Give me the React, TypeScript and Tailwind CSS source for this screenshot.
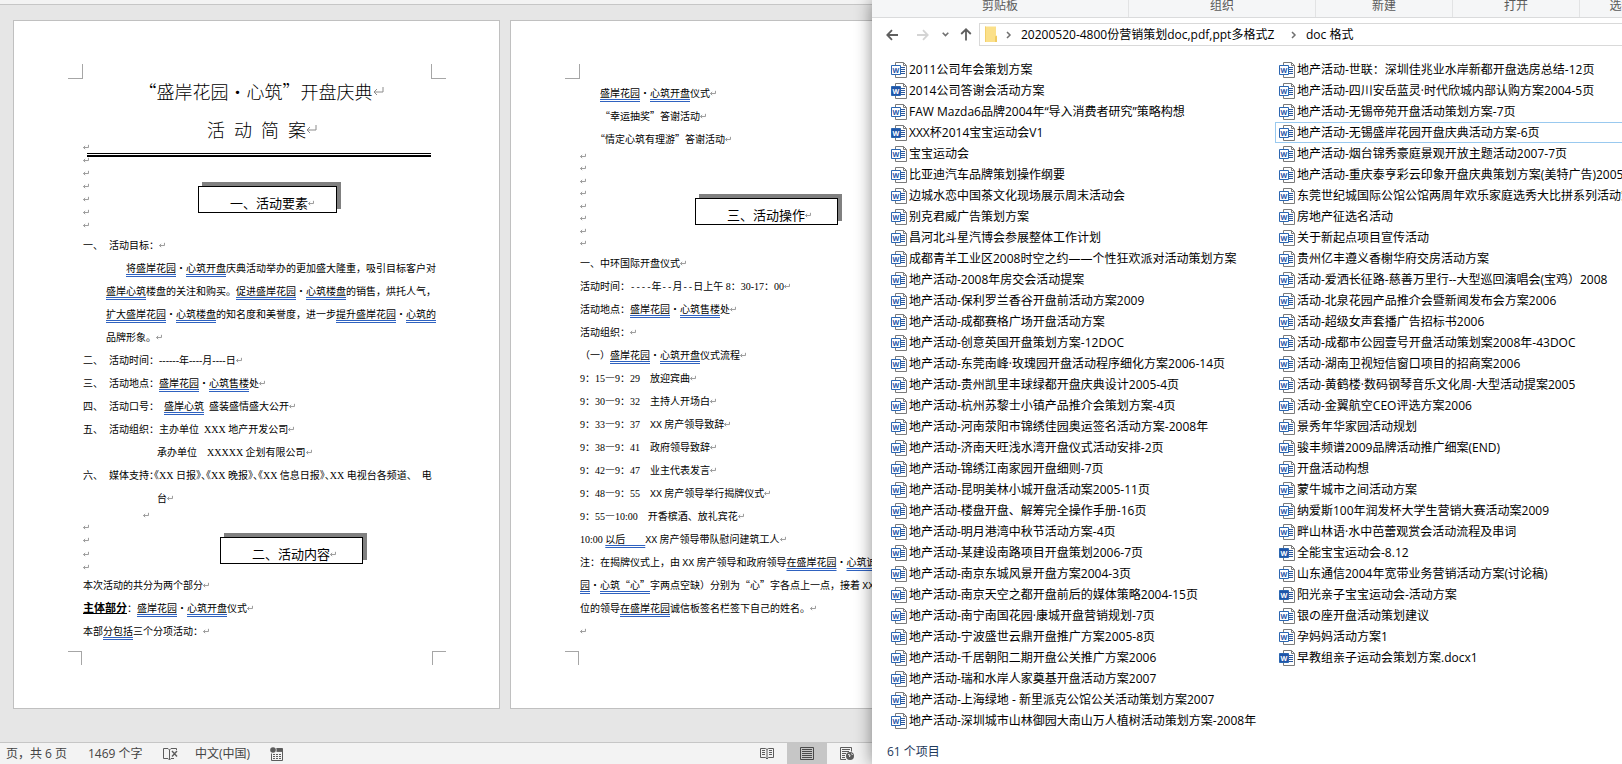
import type { ReactNode } from "react";

type FileItem = {
  name: string;
  docx?: boolean;
  focused?: boolean;
};

const FILES: FileItem[] = [
  { name: "2011公司年会策划方案" },
  { name: "2014公司答谢会活动方案", docx: true },
  { name: "FAW Mazda6品牌2004年“导入消费者研究”策略构想" },
  { name: "XXX杯2014宝宝运动会V1", docx: true },
  { name: "宝宝运动会" },
  { name: "比亚迪汽车品牌策划操作纲要" },
  { name: "边城水恋中国茶文化现场展示周末活动会" },
  { name: "别克君威广告策划方案" },
  { name: "昌河北斗星汽博会参展整体工作计划" },
  { name: "成都青羊工业区2008时空之约——个性狂欢派对活动策划方案" },
  { name: "地产活动-2008年房交会活动提案" },
  { name: "地产活动-保利罗兰香谷开盘前活动方案2009" },
  { name: "地产活动-成都赛格广场开盘活动方案" },
  { name: "地产活动-创意英国开盘策划方案-12DOC" },
  { name: "地产活动-东莞南峰·玫瑰园开盘活动程序细化方案2006-14页" },
  { name: "地产活动-贵州凯里丰球绿都开盘庆典设计2005-4页" },
  { name: "地产活动-杭州苏黎士小镇产品推介会策划方案-4页" },
  { name: "地产活动-河南荥阳市锦绣佳园奥运签名活动方案-2008年" },
  { name: "地产活动-济南天旺浅水湾开盘仪式活动安排-2页" },
  { name: "地产活动-锦绣江南家园开盘细则-7页" },
  { name: "地产活动-昆明美林小城开盘活动案2005-11页" },
  { name: "地产活动-楼盘开盘、解筹完全操作手册-16页" },
  { name: "地产活动-明月港湾中秋节活动方案-4页" },
  { name: "地产活动-某建设南路项目开盘策划2006-7页" },
  { name: "地产活动-南京东城风景开盘方案2004-3页" },
  { name: "地产活动-南京天空之都开盘前后的媒体策略2004-15页" },
  { name: "地产活动-南宁南国花园·康城开盘营销规划-7页" },
  { name: "地产活动-宁波盛世云鼎开盘推广方案2005-8页" },
  { name: "地产活动-千居朝阳二期开盘公关推广方案2006" },
  { name: "地产活动-瑞和水岸人家奠基开盘活动方案2007" },
  { name: "地产活动-上海绿地 - 新里派克公馆公关活动策划方案2007" },
  { name: "地产活动-深圳城市山林御园大南山万人植树活动策划方案-2008年" },
  { name: "地产活动-世联：深圳佳兆业水岸新都开盘选房总结-12页" },
  { name: "地产活动-四川安岳蓝灵·时代欣城内部认购方案2004-5页" },
  { name: "地产活动-无锡帝苑开盘活动策划方案-7页" },
  { name: "地产活动-无锡盛岸花园开盘庆典活动方案-6页", focused: true },
  { name: "地产活动-烟台锦秀豪庭景观开放主题活动2007-7页" },
  { name: "地产活动-重庆泰亨彩云印象开盘庆典策划方案(美特广告)2005" },
  { name: "东莞世纪城国际公馆公馆两周年欢乐家庭选秀大比拼系列活动策划" },
  { name: "房地产征选名活动" },
  { name: "关于新起点项目宣传活动" },
  { name: "贵州亿丰遵义香榭华府交房活动方案" },
  { name: "活动-爱洒长征路-慈善万里行--大型巡回演唱会(宝鸡）2008" },
  { name: "活动-北泉花园产品推介会暨新闻发布会方案2006" },
  { name: "活动-超级女声套播广告招标书2006" },
  { name: "活动-成都市公园壹号开盘活动策划案2008年-43DOC" },
  { name: "活动-湖南卫视短信窗口项目的招商案2006" },
  { name: "活动-黄鹤楼·数码钢琴音乐文化周-大型活动提案2005" },
  { name: "活动-金翼航空CEO评选方案2006" },
  { name: "景秀年华家园活动规划" },
  { name: "骏丰频谱2009品牌活动推广细案(END)" },
  { name: "开盘活动构想" },
  { name: "蒙牛城市之间活动方案" },
  { name: "纳爱斯100年润发杯大学生营销大赛活动案2009" },
  { name: "畔山林语·水中芭蕾观赏会活动流程及串词" },
  { name: "全能宝宝运动会-8.12", docx: true },
  { name: "山东通信2004年宽带业务营销活动方案(讨论稿)" },
  { name: "阳光亲子宝宝运动会-活动方案", docx: true },
  { name: "银の座开盘活动策划建议" },
  { name: "孕妈妈活动方案1" },
  { name: "早教组亲子运动会策划方案.docx1", docx: true },
];

const SCHEDULE: { from: string; to: string; body: ReactNode }[] = [
  { from: "15", to: "29", body: "放迎宾曲" },
  { from: "30", to: "32", body: "主持人开场白" },
  { from: "33", to: "37", body: <><XX /> 房产领导致辞</> },
  { from: "38", to: "41", body: "政府领导致辞" },
  { from: "42", to: "47", body: "业主代表发言" },
  { from: "48", to: "55", body: <><XX /> 房产领导举行揭牌仪式</> },
];

/* ---------- document pieces ---------- */

// grammar check underline
function G({ children }: { children: ReactNode }) {
  return (
    <span className="underline decoration-[#2f62c0] decoration-double decoration-1 underline-offset-2 [text-decoration-skip-ink:none]">
      {children}
    </span>
  );
}

// western text in the serif face
function L({ children }: { children: ReactNode }) {
  return <span className="font-['Liberation_Serif',serif]">{children}</span>;
}

// half-width monospaced text
function M({ children }: { children: ReactNode }) {
  return (
    <span className="font-['Liberation_Mono',monospace] text-[9px] leading-none">
      {children}
    </span>
  );
}

// company name placeholder
function XX() {
  return (
    <span className="font-['Liberation_Mono',monospace] text-[10px] leading-none">
      XX
    </span>
  );
}

// half-width punctuation
function H({ children }: { children: ReactNode }) {
  return <span className="[font-feature-settings:'halt']">{children}</span>;
}

function ParaMark({ large }: { large?: boolean }) {
  return (
    <svg
      viewBox="0 0 11 10"
      className={large ? "h-[10px] w-[11px] shrink-0" : "h-[6px] w-[6px] shrink-0"}
      fill="none"
      stroke="#8c8c8c"
      strokeWidth={large ? 1 : 1.6}
      aria-hidden="true"
    >
      <path d="M10 1v5H1M4 3L1 6l3 3" />
    </svg>
  );
}

function Line({ children, className = "" }: { children?: ReactNode; className?: string }) {
  return (
    <p className={`flex h-[23px] items-center whitespace-pre ${className}`}>
      <span>{children}</span>
      <ParaMark />
    </p>
  );
}

function Item({ no, children, open }: { no: string; children: ReactNode; open?: boolean }) {
  return (
    <div className="flex h-[23px] items-center whitespace-pre">
      <span className="w-[26px] shrink-0">{no}、</span>
      <span>{children}</span>
      {!open && <ParaMark />}
    </div>
  );
}

function EmptyLines({ count, children, className }: { count: number; children: ReactNode; className: string }) {
  return (
    <div className={`relative flex flex-col justify-between ${className}`}>
      {Array.from({ length: count }).map((_, i) => (
        <div key={i} className="flex h-[12px] items-center">
          <ParaMark />
        </div>
      ))}
      {children}
    </div>
  );
}

function HeadingBox({ children, className }: { children: ReactNode; className: string }) {
  return (
    <h2
      className={`absolute flex h-[27px] items-center border border-black bg-white pt-[7px] pl-[31px] text-[13px] leading-[20px] shadow-[4px_-4px_0_#808080] ${className}`}
    >
      {children}
      <ParaMark />
    </h2>
  );
}

function Page({ children }: { children: ReactNode }) {
  return (
    <article className="w-[487px] shrink-0 border border-[#c0c0c0] bg-white py-[43px] pr-[53px] pl-[54px] text-[10px] text-black">
      <div className="flex justify-between">
        <div className="size-[15px] border-r border-b border-[#a6a6a6]" />
        <div className="size-[15px] border-b border-l border-[#a6a6a6]" />
      </div>
      <div className="mx-[15px]">{children}</div>
      <div className="flex justify-between">
        <div className="size-[14px] border-t border-r border-[#a6a6a6]" />
        <div className="size-[14px] border-t border-l border-[#a6a6a6]" />
      </div>
    </article>
  );
}

function PageOne() {
  return (
    <Page>
      <h1 className="flex flex-col items-center gap-[14px] text-[18px] leading-[24px] font-light">
        <span className="flex items-center pl-[8px] whitespace-pre">
          “盛岸花园・心筑”开盘庆典
          <ParaMark large />
        </span>
        <span className="flex items-center gap-[9px] pl-[10px]">
          <span>活</span>
          <span>动</span>
          <span>简</span>
          <span className="flex items-center">
            案
            <ParaMark large />
          </span>
        </span>
      </h1>

      <EmptyLines count={7} className="h-[92px] pb-[2px]">
        <div className="absolute top-[12px] right-0 left-[4px] h-[4px] border-t border-b-2 border-black" />
        <HeadingBox className="top-[45px] left-[115px] w-[139px]">一、活动要素</HeadingBox>
      </EmptyLines>

      <Item no="一">活动目标：</Item>
      <p className="pl-[23px] leading-[23px] whitespace-pre">
        <span className="block pl-[20px]">
          <G>将盛岸花园</G>・<G>心筑开盘</G>庆典活动举办的更加盛大隆重，吸引目标客户对
        </span>
        <span className="block">
          <G>盛岸心筑</G>楼盘的关注和购买。<G>促进盛岸花园</G>・<G>心筑楼盘</G>的销售，烘托人气，
        </span>
        <span className="block">
          <G>扩大盛岸花园</G>・<G>心筑楼盘</G>的知名度和美誉度，进一步<G>提升盛岸花园</G>・<G>心筑的</G>
        </span>
        <span className="flex items-center">
          品牌形象。
          <ParaMark />
        </span>
      </p>
      <Item no="二">活动时间：<L>------</L>年<L>----</L>月<L>----</L>日</Item>
      <Item no="三">活动地点：<G>盛岸花园</G>・<G>心筑售楼</G>处</Item>
      <Item no="四">活动口号：<L>  </L><G>盛岸心筑</G><L>  </L>盛装盛情盛大公开</Item>
      <Item no="五">活动组织：主办单位<L>  XXX </L>地产开发公司</Item>
      <Line className="pl-[74px]">承办单位<L>    XXXXX </L>企划有限公司</Line>
      <Item no="六" open>
        媒体支持<H>：《</H><L>XX </L>日报<H>》、《</H><L>XX </L>晚报<H>》、《</H><L>XX </L>信息日报<H>》、</H><L>XX </L>电视台各频道<H>、</H><L>    </L>电
      </Item>
      <Line className="pl-[74px]">台</Line>

      <div className="flex h-[12px] items-center pl-[60px]">
        <ParaMark />
      </div>
      <EmptyLines count={4} className="h-[52px]">
        <HeadingBox className="top-[16px] left-[137px] w-[143px]">二、活动内容</HeadingBox>
      </EmptyLines>

      <Line>本次活动的共分为两个部分</Line>
      <Line>
        <b className="text-[11px] leading-none underline">主体部分</b>：<G>盛岸花园</G>・<G>心筑开盘</G>仪式
      </Line>
      <Line className="mb-[9px]">本部<G>分包括</G>三个分项活动：</Line>
    </Page>
  );
}

function PageTwo() {
  return (
    <Page>
      <Line className="mt-[2px] pl-[20px]"><G>盛岸花园</G>・<G>心筑开盘</G>仪式</Line>
      <Line className="pl-[20px]">“幸运抽奖”答谢活动</Line>
      <Line className="pl-[15px]">“情定心筑有理游”答谢活动</Line>

      <EmptyLines count={8} className="h-[101px] pb-[2px]">
        <HeadingBox className="top-[48px] left-[115px] w-[143px]">三、活动操作</HeadingBox>
      </EmptyLines>

      <Line>一、中环国际开盘仪式</Line>
      <Line>活动时间：<M>----</M>年<M>--</M>月<M>--</M>日上午<L> 8</L>：<L>30-17</L>：<L>00</L></Line>
      <Line>活动地点：<G>盛岸花园</G>・<G>心筑售楼</G>处</Line>
      <Line>活动组织：</Line>
      <Line>（一）<G>盛岸花园</G>・<G>心筑开盘</G>仪式流程</Line>
      {SCHEDULE.map((s) => (
        <Line key={s.from}>
          <L>9</L>：<L>{s.from}</L>—<L>9</L>：<L>{s.to}</L>　{s.body}
        </Line>
      ))}
      <Line><L>9</L>：<L>55</L>—<L>10:00</L>　开香槟酒、放礼宾花</Line>
      <Line><L>10:00 </L><G>以后　　</G><XX /> 房产领导带队慰问建筑工人</Line>
      <p className="leading-[23px] whitespace-pre">
        <span className="block h-[23px]">
          注：在揭牌仪式上，由 <XX /> 房产领导和政府领导<G>在盛岸花园</G>・<G>心筑诚信</G>
        </span>
        <span className="block h-[23px]">
          <G>园</G>・<G>心筑“心”</G>字两点空缺）分别为“心”字各点上一点，接着 <XX /> 房
        </span>
        <span className="flex h-[23px] items-center">
          <span>位的领导<G>在盛岸花园</G>诚信板签名栏签下自己的姓名。</span>
          <ParaMark />
        </span>
      </p>
      <Line className="mb-[9px]" />
    </Page>
  );
}

/* ---------- word window ---------- */

function ProofIcon() {
  return (
    <svg viewBox="0 0 15 14" className="h-[14px] w-[15px]" fill="none" stroke="#5c5c5c" aria-hidden="true">
      <path d="M6.500 12.500V3L5 1.500H.5v10H5l1.500 1.500 1.500-1.500h3M6.500 3L8 1.500h5.500V3" />
      <path d="M9 4l5 5.500M14 4L9 9.500" strokeWidth="1.400" />
    </svg>
  );
}

function MacroIcon() {
  return (
    <svg viewBox="0 0 13 14" className="h-[14px] w-[13px]" fill="none" stroke="#5c5c5c" aria-hidden="true">
      <path d="M1.500 6.500v7h11v-12H6.500" />
      <path d="M6.500 3.200h6" strokeWidth="3.400" />
      <path d="M3 7.500h2m1 0h2m1 0h2M3 9.500h2m1 0h2m1 0h2M3 11.500h2m1 0h2m1 0h2" />
      <circle cx="3" cy="3" r="2.800" fill="#5c5c5c" stroke="none" />
    </svg>
  );
}

function ReadIcon() {
  return (
    <svg viewBox="0 0 14 13" className="h-[13px] w-[14px]" fill="none" stroke="#5c5c5c" aria-hidden="true">
      <path d="M.5 1.500h5L7 2.500l1.500-1h5v9h-5L7 12l-1.500-1.500h-5zM7 2.500V12" />
      <path d="M2 3.500h3M2 5.500h3M2 7.500h3M9 3.500h3M9 5.500h3M9 7.500h3" />
    </svg>
  );
}

function PrintIcon() {
  return (
    <svg viewBox="0 0 14 13" className="h-[13px] w-[14px]" fill="none" stroke="#4a4a4a" aria-hidden="true">
      <path d="M.5.5h13v12H.5z" />
      <path d="M2 2.500h10M2 4.500h10M2 6.500h10M2 8.500h10M2 10.500h10" />
    </svg>
  );
}

function WebIcon() {
  return (
    <svg viewBox="0 0 15 14" className="h-[14px] w-[15px]" fill="none" stroke="#5c5c5c" aria-hidden="true">
      <path d="M6 12.500H.5V.5h11v4" />
      <path d="M2 2.500h8M2 4.500h7M2 6.500h4M2 8.500h3M2 10.500h3" />
      <circle cx="10" cy="9" r="4" fill="#5c5c5c" stroke="none" />
      <path d="M8 7.500l2 .5-.5 2M11.500 6.500l1 1.500" stroke="#f3f3f3" />
    </svg>
  );
}

function WordWindow() {
  return (
    <section className="flex w-[872px] shrink-0 flex-col overflow-hidden bg-[#e6e6e6] font-['Noto_Sans_CJK_SC',sans-serif]">
      <div className="h-[5px] shrink-0 border-b border-[#c6c6c6] bg-[#f3f3f3]" />
      <main className="flex min-h-0 flex-1 items-start gap-[10px] overflow-hidden pt-[15px] pl-[13px]">
        <PageOne />
        <PageTwo />
      </main>
      <footer className="flex h-[22px] shrink-0 items-center border-t border-[#c6c6c6] bg-[#f3f3f3] pl-[6px] font-['Open_Sans','Noto_Sans_CJK_SC',sans-serif] text-[12px] whitespace-nowrap text-[#444]">
        <span className="w-[82px]">页，共 6 页</span>
        <button type="button" className="w-[75px] text-left">1469 个字</button>
        <button type="button" aria-label="校对" className="w-[32px]"><ProofIcon /></button>
        <button type="button" className="w-[75px] text-left">中文(中国)</button>
        <button type="button" aria-label="宏"><MacroIcon /></button>
        <div className="ml-auto flex h-full pr-[5px]">
          <button type="button" aria-label="阅读视图" className="flex w-[40px] items-center justify-center"><ReadIcon /></button>
          <button type="button" aria-label="页面视图" className="flex w-[40px] items-center justify-center bg-[#c6c6c6]"><PrintIcon /></button>
          <button type="button" aria-label="Web 版式视图" className="flex w-[40px] items-center justify-center"><WebIcon /></button>
        </div>
      </footer>
    </section>
  );
}

/* ---------- explorer window ---------- */

function WordFileIcon({ docx }: { docx?: boolean }) {
  return (
    <svg viewBox="0 0 16 16" className="size-[16px] shrink-0" fill="none" aria-hidden="true">
      <path d="M4.500.5h8l3 3v12h-11z" fill="#fff" stroke="#7a7a7a" />
      <path d="M12.500.5v3h3" stroke="#7a7a7a" />
      <path d="M10 5.500h4M10 7.500h4M10 9.500h4M10 11.500h4" stroke="#2b579a" />
      <path d="M.5 3.500h9v9h-9z" fill={docx ? "#1f55a8" : "#fff"} stroke="#2b66b1" />
      <text
        x="5"
        y="10.500"
        textAnchor="middle"
        fontFamily="Open Sans"
        fontWeight="bold"
        fontSize="7"
        fill={docx ? "#fff" : "#1f55a8"}
      >
        W
      </text>
    </svg>
  );
}

function FolderIcon() {
  return (
    <svg viewBox="0 0 14 17" className="h-[17px] w-[14px]" aria-hidden="true">
      <path d="M1 .5h11v15.500H1z" fill="#fbe08a" />
      <path d="M1 .5h1v15.500H1z" fill="#f3d06b" />
      <path d="M11 10.500l2-1v6.500h-2z" fill="#f0cb62" />
    </svg>
  );
}

function Crumb() {
  return (
    <svg viewBox="0 0 6 8" className="h-[8px] w-[6px] shrink-0" fill="none" stroke="#707070" strokeWidth="1.500" aria-hidden="true">
      <path d="M1 1l3 3-3 3" />
    </svg>
  );
}

function ExplorerWindow() {
  return (
    <section className="z-10 flex min-w-0 flex-1 flex-col overflow-hidden bg-white font-['Open_Sans','Noto_Sans_CJK_SC',sans-serif] text-[12px] whitespace-nowrap text-black shadow-[0_0_16px_rgba(0,0,0,0.45)]">
      <header className="flex h-[18px] shrink-0 border-b border-[#dadbdc] bg-[#f5f6f7] text-center leading-[11px] text-[#5a5a5a]">
        <span className="w-[257px] shrink-0 border-r border-[#e2e3e4]">剪贴板</span>
        <span className="w-[187px] shrink-0 border-r border-[#e2e3e4]">组织</span>
        <span className="w-[137px] shrink-0 border-r border-[#e2e3e4]">新建</span>
        <span className="w-[127px] shrink-0 border-r border-[#e2e3e4]">打开</span>
        <span className="w-[83px] shrink-0">选择</span>
      </header>

      <nav className="flex h-[41px] shrink-0 items-start pt-[5px]">
        <div className="flex h-[23px] w-[107px] shrink-0 items-center pl-[14px]">
          <button type="button" aria-label="后退" className="w-[30px]">
            <svg viewBox="0 0 13 12" className="h-[12px] w-[13px]" fill="none" stroke="#5f5f5f" strokeWidth="1.800">
              <path d="M12 6H1.500M6 1.200L1.300 6 6 10.800" />
            </svg>
          </button>
          <button type="button" aria-label="前进" className="w-[26px]">
            <svg viewBox="0 0 13 12" className="h-[12px] w-[13px]" fill="none" stroke="#d4d4d4" strokeWidth="1.800">
              <path d="M1 6h10.500M7 1.200L11.700 6 7 10.800" />
            </svg>
          </button>
          <button type="button" aria-label="最近浏览的位置" className="w-[18px]">
            <svg viewBox="0 0 7 5" className="h-[5px] w-[7px]" fill="none" stroke="#707070" strokeWidth="1.600">
              <path d="M.7.8l2.800 2.800L6.300.8" />
            </svg>
          </button>
          <button type="button" aria-label="上移">
            <svg viewBox="0 0 12 13" className="h-[13px] w-[12px]" fill="none" stroke="#5f5f5f" strokeWidth="1.800">
              <path d="M6 12.500V1.500M1.200 6L6 1.300 10.800 6" />
            </svg>
          </button>
        </div>
        <div className="flex h-[23px] min-w-0 flex-1 items-center border border-r-0 border-[#d9d9d9] pl-[4px]">
          <FolderIcon />
          <span className="flex w-[23px] shrink-0 justify-center pr-[2px]"><Crumb /></span>
          <button type="button" className="w-[263px] text-left">20200520-4800份营销策划doc,pdf,ppt多格式Z</button>
          <span className="flex w-[22px] shrink-0 justify-center pr-[2px]"><Crumb /></span>
          <button type="button">doc 格式</button>
        </div>
      </nav>

      <ul className="grid shrink-0 auto-cols-[388px] grid-flow-col grid-rows-[repeat(32,21px)] pl-[15px]">
        {FILES.map((f) => (
          <li
            key={f.name}
            className={`flex items-center gap-[2px] border pl-[3px] ${f.focused ? "border-[#99c9ef]" : "border-transparent"}`}
          >
            <WordFileIcon docx={f.docx} />
            <span>{f.name}</span>
          </li>
        ))}
      </ul>

      <footer className="flex flex-1 items-center pt-[8px] pl-[15px] text-[#1e395b]">
        <span>61 个项目</span>
      </footer>
    </section>
  );
}

export default function App() {
  return (
    <div lang="zh-CN" className="flex h-screen overflow-hidden">
      <WordWindow />
      <ExplorerWindow />
    </div>
  );
}
